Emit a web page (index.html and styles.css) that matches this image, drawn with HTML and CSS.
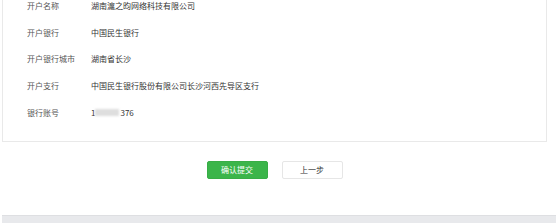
FILE: index.html
```html
<!DOCTYPE html>
<html lang="zh-CN">
<head>
    <meta charset="UTF-8">
    <title>确认开户信息</title>
    <link rel="stylesheet" href="styles.css">
</head>
<body>
    <div class="page">
        <div class="info-panel">
            <div class="info-row">
                <span class="info-label">开户名称</span>
                <span class="info-value">湖南滬之昀网络科技有限公司</span>
            </div>
            <div class="info-row">
                <span class="info-label">开户银行</span>
                <span class="info-value">中国民生银行</span>
            </div>
            <div class="info-row">
                <span class="info-label">开户银行城市</span>
                <span class="info-value">湖南省长沙</span>
            </div>
            <div class="info-row">
                <span class="info-label">开户支行</span>
                <span class="info-value">中国民生银行股份有限公司长沙河西先导区支行</span>
            </div>
            <div class="info-row">
                <span class="info-label">银行账号</span>
                <span class="info-value">1<span class="masked"></span>376</span>
            </div>
        </div>

        <div class="actions">
            <button class="btn btn-primary" type="button">确认提交</button>
            <button class="btn btn-default" type="button">上一步</button>
        </div>
    </div>
    <div class="footer-bar"></div>
</body>
</html>
```

FILE: styles.css
```css
* {
    margin: 0;
    padding: 0;
    box-sizing: border-box;
}

body {
    font-family: "Noto Sans CJK SC", "Liberation Sans", sans-serif;
    background-color: #fff;
    color: #333;
    overflow: hidden;
}

.page {
    width: 545px;
    margin-left: 2px;
}

.info-panel {
    margin-top: -8px;
    padding: 0 0 15px 24px;
    border: 1px solid #e9e9e9;
    border-top: none;
}

.info-row {
    display: flex;
    align-items: center;
    height: 26.75px;
    font-size: 8px;
}

.info-label {
    width: 64px;
    color: #555;
}

.info-value {
    display: flex;
    align-items: center;
    color: #333;
}

.masked {
    display: inline-block;
    width: 24px;
    height: 7px;
    margin: 0 1px 0 0;
    background-color: #dedede;
    filter: blur(1px);
}

.actions {
    display: flex;
    justify-content: center;
    gap: 14px;
    padding-top: 19px;
    height: 73px;
}

.btn {
    width: 61px;
    height: 18px;
    font-family: inherit;
    font-size: 8px;
    border-radius: 2px;
    cursor: pointer;
}

.btn-primary {
    background-color: #3bb54a;
    border: 1px solid #38ad46;
    color: #fff;
}

.btn-default {
    background-color: #fff;
    border: 1px solid #e6e6e6;
    color: #333;
}

.footer-bar {
    margin-left: 2px;
    width: 554px;
    height: 10px;
    background-color: #e8e9ec;
    border-top: 1px solid #dedfe2;
}
```
